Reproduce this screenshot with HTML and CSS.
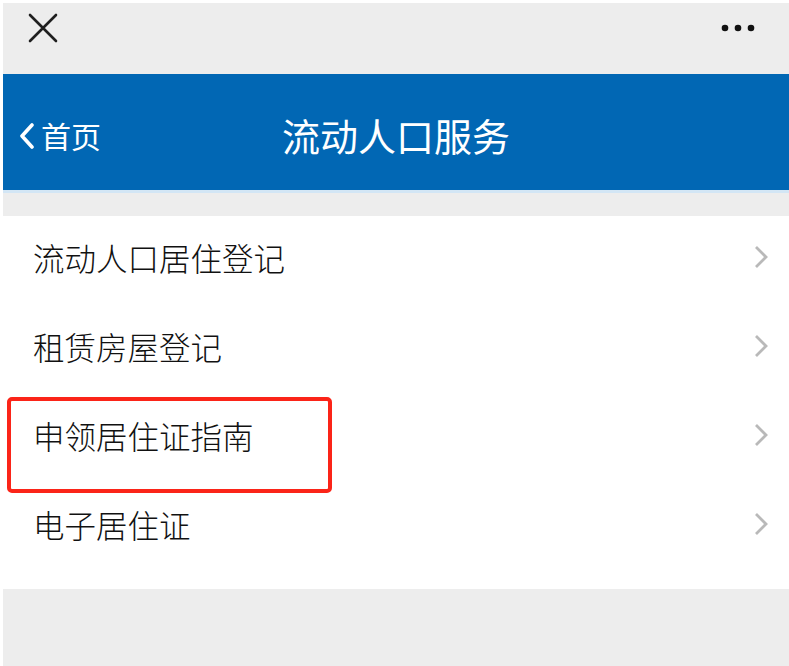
FILE: index.html
```
<!DOCTYPE html>
<html lang="zh">
<head>
<meta charset="utf-8">
<title>流动人口服务</title>
<link rel="stylesheet" href="styles.css">
</head>
<body>
<div class="page">
  <div class="topbar">
    <svg class="close" width="30" height="30" viewBox="0 0 30 30"><path d="M2 2 L28 28 M28 2 L2 28" stroke="#1f1f1f" stroke-width="2.6" stroke-linecap="round" fill="none"/></svg>
    <svg class="more" width="38" height="10" viewBox="0 0 38 10"><circle cx="4" cy="5" r="3.3" fill="#111"/><circle cx="17" cy="5" r="3.3" fill="#111"/><circle cx="30" cy="5" r="3.3" fill="#111"/></svg>
  </div>
  <div class="header">
    <div class="back">
      <svg width="16" height="26" viewBox="0 0 16 26"><path d="M13 2 L3 13 L13 24" stroke="#fff" stroke-width="3.6" stroke-linecap="round" stroke-linejoin="round" fill="none"/></svg>
      <span>首页</span>
    </div>
    <div class="title">流动人口服务</div>
  </div>
  <div class="gap"></div>
  <ul class="list">
    <li class="row"><span>流动人口居住登记</span><svg class="chev" width="14" height="24" viewBox="0 0 14 24"><path d="M2 2 L12 12 L2 22" stroke="#b9b9b9" stroke-width="2.8" fill="none"/></svg></li>
    <li class="row"><span>租赁房屋登记</span><svg class="chev" width="14" height="24" viewBox="0 0 14 24"><path d="M2 2 L12 12 L2 22" stroke="#b9b9b9" stroke-width="2.8" fill="none"/></svg></li>
    <li class="row"><span>申领居住证指南</span><svg class="chev" width="14" height="24" viewBox="0 0 14 24"><path d="M2 2 L12 12 L2 22" stroke="#b9b9b9" stroke-width="2.8" fill="none"/></svg></li>
    <li class="row"><span>电子居住证</span><svg class="chev" width="14" height="24" viewBox="0 0 14 24"><path d="M2 2 L12 12 L2 22" stroke="#b9b9b9" stroke-width="2.8" fill="none"/></svg></li>
  </ul>
  <div class="bottom"></div>
  <div class="highlight"></div>
</div>
</body>
</html>
```
FILE: styles.css
```
html, body {
  margin: 0;
  padding: 0;
  background: #ffffff;
  height: 100%;
}
body {
  font-family: "Noto Sans CJK SC", "Noto Sans", sans-serif;
  overflow: hidden;
}
.page {
  position: relative;
  margin: 3px 0 0 3px;
  height: 663px;
  display: flex;
  flex-direction: column;
}
.topbar {
  height: 71px;
  background: #ededed;
  display: flex;
  align-items: flex-start;
  justify-content: space-between;
  flex-shrink: 0;
}
.close {
  margin: 10px 0 0 25px;
}
.more {
  margin: 20px 30px 0 0;
}
.header {
  position: relative;
  height: 116px;
  background: #0167b4;
  border-bottom: 3px solid #d3e6f5;
  display: flex;
  align-items: center;
  flex-shrink: 0;
}
.back {
  display: flex;
  align-items: center;
  gap: 6px;
  padding-left: 16px;
  color: #fff;
  font-size: 30px;
  margin-top: 6px;
}
.back svg {
  margin-top: 2px;
}
.title {
  position: absolute;
  left: 0;
  right: 0;
  text-align: center;
  color: #fff;
  font-size: 38px;
  top: 50%;
  transform: translateY(-50%);
  margin-top: 2px;
}
.gap {
  height: 23px;
  background: #ededed;
  flex-shrink: 0;
}
.list {
  list-style: none;
  margin: 0;
  padding: 0 0 17px 0;
  background: #fff;
  flex-shrink: 0;
}
.row {
  height: 89px;
  display: flex;
  align-items: center;
  justify-content: space-between;
  padding: 0 21px 0 30px;
  font-size: 31.5px;
  font-weight: 300;
  color: #111;
}
.row span {
  margin-top: -7px;
}
.row .chev {
  margin-top: -7px;
}
.bottom {
  flex: 1;
  background: #ededed;
}
.highlight {
  position: absolute;
  left: 4px;
  top: 394px;
  width: 317px;
  height: 88px;
  border: 4px solid #fb2418;
  border-radius: 5px;
}
```
